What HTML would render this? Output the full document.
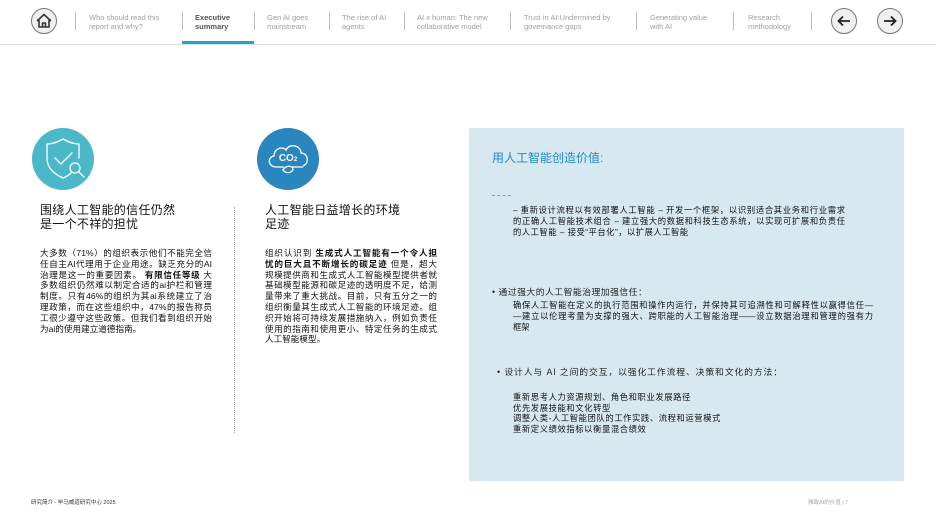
<!DOCTYPE html>
<html><head><meta charset="utf-8"><style>
*{margin:0;padding:0;box-sizing:border-box}
body{width:936px;height:526px;background:#fff;position:relative;overflow:hidden;font-family:"Liberation Sans","Noto Sans CJK SC",sans-serif;color:#222}
.a{position:absolute}
.nav{font-size:7.5px;line-height:9px;color:#a0a0a0}
.sep{position:absolute;top:12px;width:1px;height:18px;background:#bbb}
.circ{position:absolute;width:26px;height:26px;border-radius:50%;border:1px solid #777;background:#f0f0f0}
h2{position:absolute;font-weight:normal;font-size:12px;line-height:13.5px;color:#111;letter-spacing:.3px}
.p{position:absolute;font-size:8.6px;line-height:10.8px;color:#111;width:172px}
.p div,.s div.j{text-align:justify;text-align-last:justify;white-space:nowrap;height:10.8px}
.p div.l,.s div.l{text-align-last:left}
.p b{font-weight:bold}
.s{position:absolute;font-size:8.3px;line-height:10.6px;color:#111}
.s div{height:10.6px;white-space:nowrap}
</style></head><body>
<div class="circ" style="left:31px;top:8px"></div>
<svg class="a" style="left:35px;top:12px" width="18" height="18" viewBox="0 0 18 18" fill="none" stroke="#333" stroke-width="1.6" stroke-linejoin="round"><path d="M2 9 L9 2.5 L16 9"/><path d="M4 8 V15 H14 V8"/><path d="M7.5 15 V11 H10.5 V15"/></svg>
<div class="sep" style="left:75px"></div>
<div class="a nav" style="left:89px;top:13px">Who should read this<br>report and why?</div>
<div class="sep" style="left:182px"></div>
<div class="a nav" style="left:195px;top:13px;color:#555;font-weight:bold">Executive<br>summary</div>
<div class="a" style="left:182px;top:41px;width:72px;height:3px;background:#1ea7c8"></div>
<div class="sep" style="left:254px"></div>
<div class="a nav" style="left:267px;top:13px">Gen AI goes<br>mainstream</div>
<div class="sep" style="left:329px"></div>
<div class="a nav" style="left:342px;top:13px">The rise of AI<br>agents</div>
<div class="sep" style="left:404px"></div>
<div class="a nav" style="left:417px;top:13px">AI x human: The new<br>collaborative model</div>
<div class="sep" style="left:510px"></div>
<div class="a nav" style="left:524px;top:13px">Trust in AI:Undermined by<br>governance gaps</div>
<div class="sep" style="left:636px"></div>
<div class="a nav" style="left:650px;top:13px">Generating value<br>with AI</div>
<div class="sep" style="left:733px"></div>
<div class="a nav" style="left:748px;top:13px">Research<br>methodology</div>
<div class="sep" style="left:811px"></div>
<div class="circ" style="left:831px;top:8px"></div>
<svg class="a" style="left:836px;top:13px" width="16" height="16" viewBox="0 0 16 16" fill="none" stroke="#222" stroke-width="1.8"><path d="M14 8 H2.5 M7 3.5 L2.5 8 L7 12.5"/></svg>
<div class="circ" style="left:877px;top:8px"></div>
<svg class="a" style="left:882px;top:13px" width="16" height="16" viewBox="0 0 16 16" fill="none" stroke="#222" stroke-width="1.8"><path d="M2 8 H13.5 M9 3.5 L13.5 8 L9 12.5"/></svg>
<div class="a" style="left:0;top:44px;width:936px;height:1px;background:#ddd"></div>

<div class="a" style="left:32px;top:128px;width:62px;height:62px;border-radius:50%;background:#4bb8c9"></div>
<svg class="a" style="left:32px;top:128px" width="62" height="62" viewBox="0 0 62 62" fill="none" stroke="#fff" stroke-width="1.3" stroke-linejoin="round" stroke-linecap="round"><path d="M31 11 C24 15 19 16 15 16 V30 C15 40 22 46 31 50 C34 49 37 47 39 45"/><path d="M31 11 C38 15 43 16 47 16 V30"/><path d="M23 30 L29 36 L40 25"/><circle cx="43" cy="40" r="5"/><path d="M46.5 43.5 L52 49"/></svg>
<h2 style="left:40px;top:204px">围绕人工智能的信任仍然<br>是一个不祥的担忧</h2>
<div class="p" style="left:40px;top:248px">
<div>大多数（71%）的组织表示他们不能完全信</div>
<div>任自主AI代理用于企业用途。缺乏充分的AI</div>
<div>治理是这一的重要因素。 <b>有限信任等级</b> 大</div>
<div>多数组织仍然难以制定合适的ai护栏和管理</div>
<div>制度。只有46%的组织为其ai系统建立了治</div>
<div>理政策，而在这些组织中，47%的报告称员</div>
<div>工很少遵守这些政策。但我们看到组织开始</div>
<div class="l">为ai的使用建立道德指南。</div>
</div>
<div class="a" style="left:234px;top:207px;height:226px;border-left:1px dotted #aaa"></div>

<div class="a" style="left:257px;top:128px;width:62px;height:62px;border-radius:50%;background:#2a86bf"></div>
<svg class="a" style="left:257px;top:128px" width="62" height="62" viewBox="0 0 62 62" fill="none" stroke="#fff" stroke-width="1.3"><path d="M19 39 C11 39 10 29 17 28 C17 20 26 18 29 22 C32 15 44 17 44 25 C51 25 53 35 46 38"/><path d="M19 39 H27 M35 39 H46"/><path d="M26 42 C29 37 36 37 36 42 C33 46 28 45 26 42 Z"/><text x="31" y="33" fill="#fff" stroke="none" font-size="10" font-weight="bold" text-anchor="middle" font-family="Liberation Sans">CO<tspan font-size="6">2</tspan></text></svg>
<h2 style="left:265px;top:204px">人工智能日益增长的环境<br>足迹</h2>
<div class="p" style="left:265px;top:248px">
<div>组织认识到 <b>生成式人工智能有一个令人担</b></div>
<div><b>忧的巨大且不断增长的碳足迹</b> 但是，超大</div>
<div>规模提供商和生成式人工智能模型提供者就</div>
<div>基础模型能源和碳足迹的透明度不足，给测</div>
<div>量带来了重大挑战。目前，只有五分之一的</div>
<div>组织衡量其生成式人工智能的环境足迹。组</div>
<div>织开始将可持续发展措施纳入，例如负责任</div>
<div>使用的指南和使用更小、特定任务的生成式</div>
<div class="l">人工智能模型。</div>
</div>

<div class="a" style="left:469px;top:128px;width:435px;height:353px;background:#d8e8f1"></div>
<div class="a" style="left:492px;top:149px;font-size:12px;color:#1e8bc3">用人工智能创造价值:</div>
<div class="a" style="left:492px;top:195px;width:19px;border-top:1px dashed #999"></div>
<div class="s" style="left:513px;top:205px;width:332px">
<div class="j">– 重新设计流程以有效部署人工智能 – 开发一个框架，以识别适合其业务和行业需求</div>
<div class="j">的正确人工智能技术组合 – 建立强大的数据和科技生态系统，以实现可扩展和负责任</div>
<div style="letter-spacing:.5px">的人工智能 – 接受“平台化”，以扩展人工智能</div>
</div>
<div class="a" style="left:492px;top:285px;font-size:8.8px;letter-spacing:.5px">• 通过强大的人工智能治理加强信任：</div>
<div class="s" style="left:513px;top:300px;width:360px">
<div class="j">确保人工智能在定义的执行范围和操作内运行，并保持其可追溯性和可解释性以赢得信任—</div>
<div class="j">—建立以伦理考量为支撑的强大、跨职能的人工智能治理——设立数据治理和管理的强有力</div>
<div>框架</div>
</div>
<div class="a" style="left:497px;top:365px;font-size:8.8px;letter-spacing:.9px">• 设计人与 AI 之间的交互，以强化工作流程、决策和文化的方法：</div>
<div class="s" style="left:513px;top:392px;letter-spacing:.6px">
<div>重新思考人力资源规划、角色和职业发展路径</div>
<div>优先发展技能和文化转型</div>
<div>调整人类-人工智能团队的工作实践、流程和运营模式</div>
<div>重新定义绩效指标以衡量混合绩效</div>
</div>

<div class="a" style="left:31px;top:498px;font-size:5.5px;color:#333">研究简介 - 毕马威道研究中心 2025</div>
<div class="a" style="left:808px;top:498px;font-size:5.5px;color:#aaa">雅致AI的价值 | 7</div>
</body></html>
